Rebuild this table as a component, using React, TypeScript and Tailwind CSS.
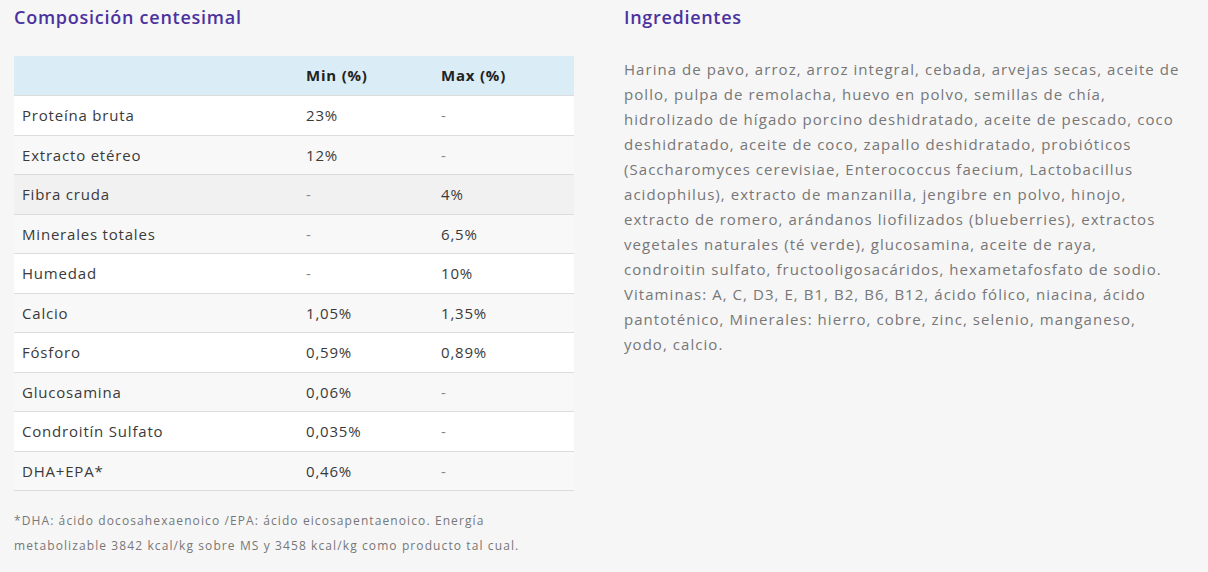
import React from "react";

const rows: [string, string, string][] = [
  ["Proteína bruta", "23%", "-"],
  ["Extracto etéreo", "12%", "-"],
  ["Fibra cruda", "-", "4%"],
  ["Minerales totales", "-", "6,5%"],
  ["Humedad", "-", "10%"],
  ["Calcio", "1,05%", "1,35%"],
  ["Fósforo", "0,59%", "0,89%"],
  ["Glucosamina", "0,06%", "-"],
  ["Condroitín Sulfato", "0,035%", "-"],
  ["DHA+EPA*", "0,46%", "-"],
];

const lines = [
  "Harina de pavo, arroz, arroz integral, cebada, arvejas secas, aceite de",
  "pollo, pulpa de remolacha, huevo en polvo, semillas de chía,",
  "hidrolizado de hígado porcino deshidratado, aceite de pescado, coco",
  "deshidratado, aceite de coco, zapallo deshidratado, probióticos",
  "(Saccharomyces cerevisiae, Enterococcus faecium, Lactobacillus",
  "acidophilus), extracto de manzanilla, jengibre en polvo, hinojo,",
  "extracto de romero, arándanos liofilizados (blueberries), extractos",
  "vegetales naturales (té verde), glucosamina, aceite de raya,",
  "condroitin sulfato, fructooligosacáridos, hexametafosfato de sodio.",
  "Vitaminas: A, C, D3, E, B1, B2, B6, B12, ácido fólico, niacina, ácido",
  "pantoténico, Minerales: hierro, cobre, zinc, selenio, manganeso,",
  "yodo, calcio.",
];

export default function App() {
  return (
    <div
      className="w-[1208px] h-[572px] bg-[#f6f6f6] flex overflow-hidden"
      style={{ fontFamily: '"Open Sans", "DejaVu Sans", sans-serif' }}
    >
      <div className="w-[560px] ml-[14px] pt-[5px]">
        <h2 className="text-[18px] leading-[24px] font-semibold text-[#4b329e] tracking-[0.75px]">
          Composición centesimal
        </h2>
        <div className="mt-[27px] text-[15px] tracking-[0.8px] text-[#3a3a3a]">
          <div className="flex h-[40px] items-center bg-[#daecf6] border-b border-[#dcdcdc] font-bold text-[#222]">
            <div className="w-[284px] pl-2" />
            <div className="w-[135px] pl-2">Min (%)</div>
            <div className="flex-1 pl-2">Max (%)</div>
          </div>
          {rows.map((r, i) => (
            <div
              key={r[0]}
              className={
                "flex h-[39.5px] items-center border-b border-[#dcdcdc] " +
                (i === 2 ? "bg-[#f1f1f1]" : i % 2 === 0 ? "bg-white" : "bg-[#f8f8f8]")
              }
            >
              <div className="w-[284px] pl-2">{r[0]}</div>
              <div className={"w-[135px] pl-2 " + (r[1] === "-" ? "text-[#888]" : "")}>{r[1]}</div>
              <div className={"flex-1 pl-2 " + (r[2] === "-" ? "text-[#888]" : "")}>{r[2]}</div>
            </div>
          ))}
        </div>
        <p className="mt-[17px] text-[12px] leading-[25px] text-[#777] tracking-[1.1px] whitespace-nowrap">
          *DHA: ácido docosahexaenoico /EPA: ácido eicosapentaenoico. Energía
          <br />
          metabolizable 3842 kcal/kg sobre MS y 3458 kcal/kg como producto tal cual.
        </p>
      </div>
      <div className="ml-[50px] pt-[5px] flex-1">
        <h2 className="text-[18px] leading-[24px] font-semibold text-[#4b329e] tracking-[0.7px]">
          Ingredientes
        </h2>
        <p className="mt-[28px] text-[15px] leading-[25px] text-[#777] tracking-[1.05px] whitespace-nowrap">
          {lines.map((l, i) => (
            <React.Fragment key={i}>
              {l}
              {i < lines.length - 1 && <br />}
            </React.Fragment>
          ))}
        </p>
      </div>
    </div>
  );
}
